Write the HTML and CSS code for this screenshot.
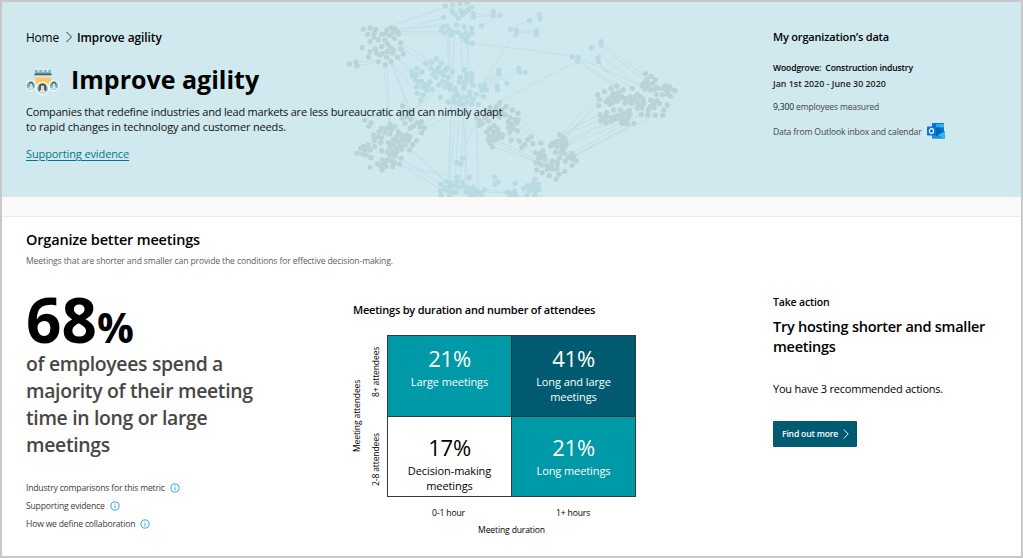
FILE: index.html
```html
<!DOCTYPE html>
<html lang="en">
<head>
<meta charset="utf-8">
<title>Improve agility</title>
<link rel="stylesheet" href="styles.css">
</head>
<body>
<div class="page">
  <header class="hero">
    <svg class="network" width="1019" height="195" viewBox="2 2 1019 195" aria-hidden="true">
      <g transform="translate(330 0) scale(.33333)">
        <path class="link" d="M190 75L345 22M205 90L345 52M205 95L335 70M210 102H333M210 95H335M210 85L350 78M212 129L305 187M205 135L300 205M190 160L260 225M195 165L255 240M170 190L180 375M160 190L176 360M180 185L260 370M185 180L245 360M185 190L265 280M81 197L150 185M77 186L150 182M355 110L365 216M350 110L360 230M373 105L360 440L355 540M362 130L335 190M393 110L400 300M410 125L425 230M412 125V220M541 89L628 44M561 92H619M561 98H619M455 255L560 92M450 257L506 211M455 265L506 222M455 255L570 200M463 258L570 215M427 130L570 146L726 168L745 173M500 308L743 184M365 310L355 540M378 310L360 545M390 310L375 545M400 310L392 545M410 310L405 540M440 370L445 570M398 313L413 560M445 355L382 488M290 384L380 335M275 375L370 320M262 320L310 280M280 300L225 360M240 450L350 545M215 475L345 562M210 493L335 570M210 500L382 531M240 440L340 540M430 52L489 46M509 46L454 78M430 42L490 46M464 570L540 576M480 578H550"/>
        <path class="link grey" d="M564 345L635 430M564 370L603 411M510 395L568 423L620 470M487 425L618 485M487 440L618 485M490 415L618 478M745 180L860 258M743 184L880 280M750 175L935 258M813 125L946 230M814 136L940 240M784 143L935 265M804 173L823 210L907 265M805 184L855 258M705 420L808 298M700 410L806 317M689 404L810 344M705 425L830 365M708 432L855 358M732 467L912 370M739 465L976 345M705 440L934 344M668 429L803 290M725 460L890 370M700 404L940 312"/>
        <path class="dot grey" d="M100 87h0M120 84h0M137 88h0M113 103h0M132 100h0M131 112h0M120 124h0M145 119h0M155 103h0M168 100h0M165 120h0M183 84h0M171 90h0M194 86h0M203 95h0M190 97h0M205 102h0M193 115h0M180 106h0M212 129h0M213 147h0M220 162h0M202 172h0M96 143h0M120 155h0M116 171h0M136 147h0M155 140h0M172 131h0M180 142h0M190 150h0M172 155h0M158 160h0M145 185h0M166 194h0M183 185h0M170 172h0M188 160h0M150 165h0M140 160h0M58 192h0M77 186h0M81 197h0
M218 318h0M238 335h0M104 361h0M123 369h0M116 379h0M180 373h0M216 355h0M230 350h0M243 358h0M225 370h0M250 378h0M240 385h0M262 368h0M275 365h0M270 380h0M284 384h0M275 398h0M155 385h0M170 385h0M185 388h0M195 380h0M147 395h0M165 398h0M180 402h0M130 405h0M145 410h0M133 413h0M155 413h0M205 395h0M215 405h0M230 405h0M240 410h0M225 417h0M200 410h0M215 420h0M235 422h0M260 422h0M190 420h0M205 425h0M175 428h0M190 435h0M210 437h0M225 435h0M248 435h0M152 428h0M180 440h0M200 445h0M215 448h0M238 450h0M133 422h0M134 440h0M115 435h0M100 440h0M92 445h0M105 448h0M120 450h0M108 465h0M123 473h0M98 462h0M81 460h0M155 452h0M172 455h0M187 455h0M200 457h0M213 475h0M195 468h0M180 465h0M172 480h0M157 480h0M185 483h0M208 493h0M193 488h0M143 492h0M165 492h0M188 500h0M168 500h0M152 497h0M156 510h0M120 502h0
M440 353h0M449 363h0M465 353h0M458 370h0M448 376h0M475 363h0M495 330h0M485 340h0M470 335h0M509 308h0M480 322h0M500 320h0M528 320h0M515 330h0M547 330h0M564 340h0M525 345h0M540 352h0M555 358h0M564 361h0M508 352h0M535 365h0M545 372h0M560 370h0M535 382h0M550 385h0M562 392h0M540 397h0M520 340h0M480 385h0M492 377h0M503 385h0M470 395h0M490 395h0M505 397h0M477 408h0M490 408h0M505 410h0M517 405h0M475 420h0M490 420h0M500 418h0M480 430h0M487 440h0M516 412h0M543 421h0
M946 221h0M963 229h0M951 239h0M976 239h0M940 250h0M955 250h0M968 250h0M938 258h0M955 260h0M980 262h0M945 268h0M962 270h0M972 268h0M985 265h0M1005 258h0M1018 260h0M1025 268h0M1035 272h0M1010 270h0M998 285h0M1013 282h0M1022 289h0M979 283h0M997 265h0M861 258h0M843 265h0M879 269h0M907 265h0M823 275h0M803 284h0M808 298h0M806 317h0M865 278h0M850 280h0M860 288h0M845 290h0M835 298h0M855 298h0M868 295h0M848 308h0M862 303h0M828 305h0M840 313h0M875 290h0M885 296h0M900 290h0M895 302h0M910 298h0M922 283h0M915 290h0M930 290h0M905 310h0M922 305h0M938 297h0M940 305h0M925 315h0M940 312h0M922 325h0M935 325h0M962 300h0M980 302h0M988 311h0M970 313h0M960 320h0M972 323h0M955 330h0M1001 330h0M1012 315h0M998 346h0M976 345h0M953 345h0M934 344h0M885 310h0
M810 344h0M830 338h0M851 330h0M872 330h0M898 331h0M818 352h0M830 350h0M812 362h0M828 365h0M845 352h0M860 348h0M875 342h0M888 340h0M900 343h0M855 358h0M868 355h0M880 355h0M895 355h0M890 366h0M843 364h0M875 368h0M885 371h0M893 372h0M912 370h0M828 370h0
M689 404h0M700 412h0M668 429h0M682 425h0M693 422h0M705 420h0M662 438h0M675 432h0M695 435h0M708 432h0M681 441h0M698 447h0M705 440h0M676 457h0M692 457h0M704 460h0M689 473h0M725 460h0M732 467h0M715 472h0M723 475h0M739 483h0M706 483h0M726 496h0M730 478h0M633 429h0M608 431h0M603 411h0M592 419h0M584 434h0M575 442h0M568 423h0M638 452h0M617 458h0M630 462h0M643 467h0M625 475h0M635 473h0M645 478h0M618 488h0M628 490h0M620 510h0M635 495h0M650 495h0M637 518h0M658 527h0M678 537h0M688 523h0M704 514h0M666 483h0M682 485h0M665 497h0M682 495h0M652 508h0M665 507h0M680 508h0"/>
        <path class="dot" d="M346 18h0M368 15h0M390 11h0M411 8h0M425 22h0M340 52h0M366 33h0M375 44h0M385 55h0M397 45h0M408 35h0M392 32h0M430 40h0M431 52h0M415 30h0M490 34h0M489 46h0M509 46h0M454 78h0M380 75h0M333 90h0M340 80h0M345 98h0M358 90h0M362 105h0M370 97h0M385 97h0M402 80h0M408 98h0M425 85h0M427 99h0M395 108h0M405 118h0M414 108h0M412 125h0M427 130h0M350 78h0M541 89h0M560 92h0M559 103h0
M287 190h0M319 176h0M305 187h0M334 190h0M246 215h0M261 205h0M247 228h0M260 224h0M276 216h0M255 240h0M265 245h0M260 260h0M262 280h0M272 300h0M280 285h0M290 270h0M285 255h0M300 245h0M307 268h0M293 257h0M277 262h0M275 245h0M303 205h0M315 215h0M309 225h0M325 203h0M330 218h0M345 211h0M352 203h0M367 216h0M340 226h0M355 232h0M318 232h0M337 245h0M350 246h0M360 256h0M327 255h0M345 262h0M360 268h0M332 292h0M375 265h0M378 278h0M372 292h0M385 287h0M354 306h0M372 306h0M390 300h0M403 292h0M398 313h0M412 305h0M418 288h0M430 298h0M425 312h0M387 310h0M445 313h0M403 209h0M425 220h0M410 220h0M390 233h0M410 231h0M427 232h0M388 246h0M405 246h0M422 243h0M402 265h0M430 255h0M403 256h0M420 275h0M440 283h0M450 257h0M463 258h0M455 270h0M460 289h0M470 270h0M506 211h0M507 222h0M531 250h0M501 257h0M503 269h0M567 206h0M568 216h0M586 217h0
M399 475h0M380 488h0M392 492h0M382 531h0M418 532h0M494 531h0M504 546h0M495 552h0M350 545h0M362 548h0M380 545h0M397 547h0M332 553h0M332 572h0M345 562h0M360 560h0M375 558h0M388 562h0M405 560h0M350 572h0M365 575h0M378 577h0M360 585h0M333 587h0M408 575h0M425 573h0M418 565h0M430 562h0M440 573h0M450 578h0M464 570h0M455 587h0M435 587h0M420 585h0M555 550h0M532 576h0M545 580h0M555 573h0M540 587h0M558 587h0
M628 44h0M630 56h0M599 62h0M619 92h0M619 103h0M726 170h0M745 173h0M743 184h0M784 143h0M813 125h0M814 136h0M804 173h0M805 184h0M615 538h0M610 550h0M625 553h0M592 557h0M605 560h0M581 566h0M620 565h0M598 572h0M615 572h0M627 569h0M590 587h0M615 585h0"/>
      </g>
    </svg>
    <section class="intro">
      <nav class="crumbs"><a>Home</a>
        <svg class="crumb-arrow" width="8" height="12" viewBox="0 0 8 12"><path d="M1.500 1l5 5-5 5"/></svg>
        <b>Improve agility</b></nav>
      <div class="heading">
        <svg class="agility-icon" width="36" height="30" viewBox="0 0 36 30">
          <path fill="#69bfd0" d="M9 3h16v4H9z"/><path stroke="#e3eef0" stroke-width="1.500" d="M12.500 1v4M17 1v4M21.500 1v4"/>
          <path fill="#5d5a58" d="M8.500 6.500h17v2h-17z"/><path fill="#e2e2dc" d="M9 8.500h16v2H9z"/><path fill="#ffc963" d="M9.500 10.500h15.500v8H9.500z"/>
          <g stroke="#fff" stroke-width="1.200"><circle cx="4.800" cy="18.800" r="5" fill="#69bfd0"/><circle cx="28" cy="18.800" r="5" fill="#69bfd0"/></g>
          <path fill="#5d5a58" d="M2.800 18.500v-1.500q0-2.400 2.200-2.400t2.200 2.400v1.500zM25.800 18.500v-1.500q0-2.400 2.200-2.400t2.200 2.400v1.500z"/>
          <path fill="#dedede" d="M3.700 16.500h2.600v3.500l2 1.500q-3.300 2.400-6.600 0l2-1.500zM26.700 16.500h2.600v3.500l2 1.500q-3.300 2.400-6.600 0l2-1.500z"/>
          <circle cx="16.500" cy="21.500" r="6" fill="#69bfd0" stroke="#fff" stroke-width="1.300"/>
          <path fill="#5d5a58" d="M12.800 25v-5q0-3.700 3.700-3.700t3.700 3.700v5z"/>
          <path fill="#dedede" d="M15 18.800h3v4l2.500 2.200q-4 3-8 0l2.500-2.200z"/>
        </svg>
        <h1>Improve agility</h1>
      </div>
      <p class="summary">Companies that redefine industries and lead markets are less bureaucratic and can nimbly adapt<br><span>to rapid changes in technology and customer needs.</span></p>
      <a class="evidence">Supporting evidence</a>
    </section>
    <aside class="org">
      <h2 class="org-title">My organization’s data</h2>
      <p class="org-name">Woodgrove:&nbsp; Construction industry</p>
      <p class="org-dates">Jan 1st 2020 - June 30 2020</p>
      <p class="org-count"><span class="strong">9,300</span> employees measured</p>
      <p class="org-source"><span>Data from Outlook inbox and calendar</span>
        <svg class="outlook" width="18" height="16" viewBox="0 0 18 16">
          <path fill="#0078d4" d="M5 .8Q5 0 5.800 0H16.200Q17 0 17 .8V9H5z"/><path fill="#28a8ea" d="M9 1h4v3.500H9z"/><path fill="#32b4f0" d="M13 1h4v3.500h-4z"/><path fill="#0364b8" d="M9 4.500h4V8H9z"/><path fill="#0f5fae" d="M9 8h9l-5 4z"/>
          <path fill="#1490df" d="M5 8l13 7.500q-.3.300-.8.300H5.800Q5 15.800 5 15z"/><path fill="#0b5cad" d="M9 9l9-1-5.500 3.800L9 13z"/><path fill="#32b8f1" d="M18 8v7q0 .5-.4.700L11 12z"/>
          <rect y="3.500" width="9" height="9" rx=".7" fill="#0078d4"/><ellipse cx="4.500" cy="8" rx="2.100" ry="2.300" fill="none" stroke="#fff" stroke-width="1.200"/>
        </svg></p>
    </aside>
  </header>
  <div class="strip"></div>
  <main class="content">
    <div class="section-head">
      <h2>Organize better meetings</h2>
      <p>Meetings that are shorter and smaller can provide the conditions for effective decision-making.</p>
    </div>
    <section class="metric">
      <div class="big">68<span class="pct">%</span></div>
      <p class="statement">of employees spend a<br>majority of their meeting<br>time in long or large<br>meetings</p>
      <ul class="notes">
        <li>Industry comparisons for this metric <svg width="10" height="10" viewBox="0 0 10 10"><circle cx="5" cy="5" r="4.100"/><path d="M5 4.300v3M5 2.500v.9"/></svg></li>
        <li>Supporting evidence <svg width="10" height="10" viewBox="0 0 10 10"><circle cx="5" cy="5" r="4.100"/><path d="M5 4.300v3M5 2.500v.9"/></svg></li>
        <li>How we define collaboration <svg width="10" height="10" viewBox="0 0 10 10"><circle cx="5" cy="5" r="4.100"/><path d="M5 4.300v3M5 2.500v.9"/></svg></li>
      </ul>
    </section>
    <section class="chart">
      <h3>Meetings by duration and number of attendees</h3>
      <div class="plot">
        <div class="y-title">Meeting attendees</div>
        <div class="y-label top">8+ attendees</div>
        <div class="y-label bottom">2-8 attendees</div>
        <div class="matrix">
          <div class="cell teal"><span class="num">21%</span><span class="cap">Large meetings</span></div>
          <div class="cell dark"><span class="num">41%</span><span class="cap">Long and large<br>meetings</span></div>
          <div class="cell low plain"><span class="num">17%</span><span class="cap">Decision-making<br>meetings</span></div>
          <div class="cell low teal"><span class="num">21%</span><span class="cap">Long meetings</span></div>
        </div>
        <div class="x-labels"><span>0-1 hour</span><span>1+ hours</span></div>
        <div class="x-title">Meeting duration</div>
      </div>
    </section>
    <aside class="action">
      <h4>Take action</h4>
      <h3>Try hosting shorter and smaller<br>meetings</h3>
      <p>You have 3 recommended actions.</p>
      <button class="more">Find out more <svg width="6" height="10" viewBox="0 0 6 10"><path d="M.7.500l4.500 4.500-4.500 4.500"/></svg></button>
    </aside>
  </main>
</div>
</body>
</html>
```

FILE: styles.css
```css
* { box-sizing: border-box; margin: 0; padding: 0; }
body { font-family: "Open Sans", "Noto Sans", sans-serif; color: #000; background: #fff; }
svg { flex: none; display: block; fill: none; }
.page { width: 1023px; height: 558px; border: 2px solid #c8c8c8; overflow: hidden; white-space: nowrap; display: flex; flex-direction: column; }

/* Hero */
.hero { position: relative; height: 195px; flex: none; background: #cfe9ee; display: grid; grid-template-columns: 747px 1fr; padding: 26px 0 0 24px; }
.network { position: absolute; left: 0; top: 0; }
.dot { stroke: #b8dae1; stroke-width: 16; stroke-linecap: round; }
.dot.grey { stroke: #bad3d9; }
.link { stroke: #bddde3; stroke-width: 2.2; }
.link.grey { stroke: #c1dadf; }
.intro, .org { position: relative; }
.crumbs { display: flex; align-items: center; height: 18px; font-size: 11.9px; line-height: 18px; letter-spacing: -0.15px; }
.crumbs a { width: 39px; }
.crumbs b { font-weight: 600; letter-spacing: -0.05px; padding-left: 4px; }
.crumb-arrow { stroke: #222; stroke-width: .9; }
.heading { display: flex; align-items: flex-start; height: 34px; margin-top: 16px; }
.agility-icon { margin: 5px 9px 0 0; }
h1 { font-size: 25px; line-height: 34px; font-weight: 700; }
.summary { margin-top: 8px; font-size: 11px; line-height: 15px; letter-spacing: -0.205px; color: #111; }
.summary span { letter-spacing: -0.155px; }
.evidence { display: inline-block; margin-top: 12px; font-size: 11px; line-height: 16px; letter-spacing: -0.11px; color: #007789; text-decoration: underline; text-underline-offset: 2px; text-decoration-thickness: 1px; }
.org-title { padding-top: 1px; font-size: 11px; line-height: 16px; font-weight: 600; letter-spacing: -0.18px; }
.org-name { margin-top: 15px; font-size: 8.6px; line-height: 16px; font-weight: 600; letter-spacing: -0.14px; }
.org-dates { font-size: 8.9px; line-height: 16px; font-weight: 600; color: #252423; }
.org-count { margin-top: 7px; font-size: 8.6px; line-height: 16px; letter-spacing: -0.18px; color: #484644; }
.strong { color: #201f1e; }
.org-source { display: flex; align-items: center; margin-top: 9px; height: 16px; font-size: 8.6px; line-height: 16px; letter-spacing: -0.15px; color: #484644; }
.outlook { margin: -2px 0 0 5px; }

.strip { flex: none; height: 20px; background: #faf9f8; border-bottom: 1px solid #edebe9; }

/* Content */
.content { flex: 1; display: grid; grid-template-columns: 327px 420px 1fr; grid-template-rows: 59px 1fr; padding: 13px 0 0 24px; }
.section-head { grid-column: 1 / -1; }
.section-head h2 { font-size: 14.5px; line-height: 20px; font-weight: 600; letter-spacing: -0.18px; }
.section-head p { margin-top: 5px; font-size: 8.6px; line-height: 12px; letter-spacing: -0.133px; color: #605e5c; }
.big { font-size: 62px; line-height: 60px; height: 60px; font-weight: 700; }
.pct { font-size: 41px; line-height: 1; }
.statement { padding-top: 1px; font-size: 19.4px; line-height: 27px; font-weight: 600; letter-spacing: -0.32px; color: #484644; }
.notes { list-style: none; margin-top: 21px; font-size: 8.6px; line-height: 18px; letter-spacing: -0.19px; color: #3b3a39; }
.notes li { display: flex; align-items: center; gap: 5px; height: 18px; }
.notes svg { stroke: #1a9fe0; stroke-width: .9; margin-top: -1px; }

.chart { padding-top: 13px; }
.chart h3 { font-size: 11px; line-height: 16px; font-weight: 600; letter-spacing: -0.205px; }
.plot { display: grid; grid-template-columns: 12px 22px 250px; grid-template-rows: 81px 81px 12px 12px; margin-top: 17px; font-size: 8.6px; line-height: 12px; letter-spacing: -0.15px; }
.y-title, .y-label { writing-mode: vertical-rl; transform: rotate(180deg); display: flex; align-items: center; justify-content: center; }
.y-title { grid-column: 1; grid-row: 1 / 3; width: 8px; line-height: 8px; }
.y-label { grid-column: 2; width: 22px; line-height: 22px; }
.y-label.top { grid-row: 1; margin-top: -8px; }
.y-label.bottom { grid-row: 2; margin-bottom: -6px; }
.matrix { grid-column: 3; grid-row: 1 / 3; display: grid; grid-template-columns: 123px 123px; grid-template-rows: 80px 79px; gap: 1px; width: 249px; height: 162px; border: 1px solid #33393b; background: #33393b; }
.cell { display: flex; flex-direction: column; align-items: center; text-align: center; padding-top: 10px; color: #fff; }
.cell.low { padding-top: 18px; }
.teal { background: #0099a8; }
.dark { background: #005b70; }
.plain { background: #fff; color: #000; }
.num { font-size: 22px; line-height: 24px; letter-spacing: -0.2px; }
.cap { margin-top: 4px; font-size: 11px; line-height: 15px; letter-spacing: -0.09px; }
.x-labels { grid-column: 3; grid-row: 3; margin-top: 10px; display: grid; grid-template-columns: 123px 126px; text-align: center; height: 12px; }
.x-title { grid-column: 3; grid-row: 4; margin-top: 15px; text-align: center; height: 12px; width: 249px; }

.action { padding-top: 5px; }
.action h4 { font-size: 10.5px; line-height: 16px; font-weight: 600; letter-spacing: -0.17px; }
.action h3 { margin-top: 7px; font-size: 14.5px; line-height: 20px; font-weight: 600; letter-spacing: -0.25px; }
.action p { margin-top: 24px; font-size: 11px; line-height: 16px; letter-spacing: -0.22px; }
.more { display: flex; align-items: center; gap: 5px; width: 84px; height: 26px; margin-top: 24px; padding-left: 9px; border: 0; border-radius: 1px; background: #005b70; color: #fff; font: 600 8.6px/16px "Open Sans", sans-serif; letter-spacing: -0.18px; }
.more svg { stroke: #fff; stroke-width: .9; }
```
